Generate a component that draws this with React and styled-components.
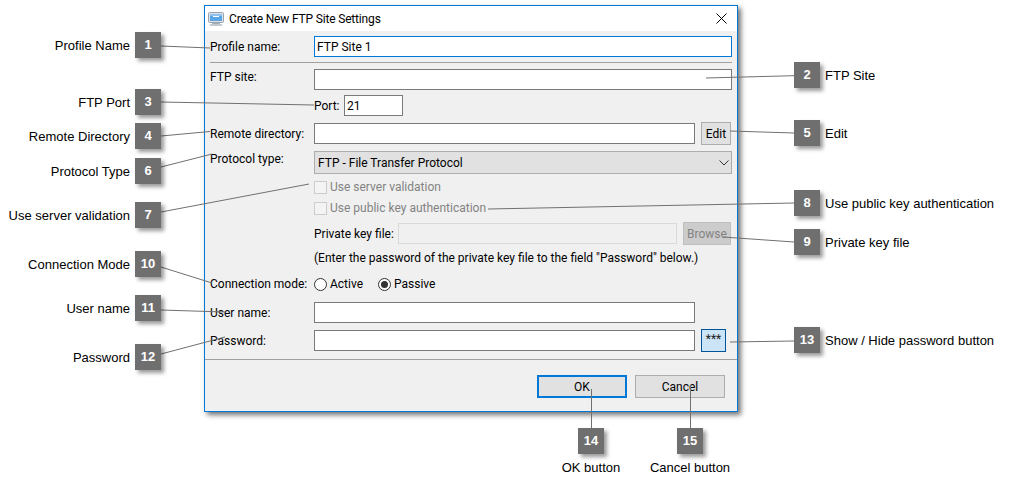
import React from "react";
import styled, { createGlobalStyle } from "styled-components";

const UI_FONT = 'Roboto, "Noto Sans", sans-serif';
const NOTE_FONT = '"Liberation Sans", Arial, sans-serif';

const GlobalStyle = createGlobalStyle`
  html, body {
    margin: 0;
    padding: 0;
    background: #fff;
  }
`;

const leftCallouts = [
  { n: 1, y: 32, text: "Profile Name", textY: 45 },
  { n: 3, y: 89, text: "FTP Port", textY: 102 },
  { n: 4, y: 123, text: "Remote Directory", textY: 136 },
  { n: 6, y: 158, text: "Protocol Type", textY: 171 },
  { n: 7, y: 202, text: "Use server validation", textY: 215 },
  { n: 10, y: 251, text: "Connection Mode", textY: 264 },
  { n: 11, y: 295, text: "User name", textY: 308 },
  { n: 12, y: 344, text: "Password", textY: 357 },
];

const rightCallouts = [
  { n: 2, y: 62, text: "FTP Site", textY: 75 },
  { n: 5, y: 120, text: "Edit", textY: 133 },
  { n: 8, y: 190, text: "Use public key authentication", textY: 203 },
  { n: 9, y: 229, text: "Private key file", textY: 242 },
  { n: 13, y: 327, text: "Show / Hide password button", textY: 340 },
];

const bottomCallouts = [
  { n: 14, x: 578, text: "OK button" },
  { n: 15, x: 677, text: "Cancel button" },
];

const leaders = [
  [161, 46, 210, 48],
  [820, 75, 706, 78],
  [161, 102, 314, 105],
  [161, 136, 210, 131.5],
  [794, 133, 730, 131],
  [161, 167, 212, 154],
  [161, 212, 309, 184],
  [794, 203, 488, 209],
  [794, 242, 723, 237],
  [161, 267, 212, 283],
  [161, 310, 225, 312],
  [161, 354, 225, 337],
  [794, 341, 730, 342],
  [591.5, 428, 591.5, 389],
  [690.5, 428, 690.5, 385],
];

const Canvas = styled.div`
  position: relative;
  width: 1012px;
  height: 491px;
  overflow: hidden;
  padding: 5px 0 0 204px;
  box-sizing: border-box;
`;

const Dialog = styled.div`
  width: 534px;
  height: 407px;
  box-sizing: border-box;
  border: 1px solid #0078d7;
  background: #f0f0f0;
  box-shadow: 3px 3px 5px rgba(0, 0, 0, 0.55);
  display: flex;
  flex-direction: column;
  font-family: ${UI_FONT};
  font-size: 12px;
  color: #000;
`;

const TitleBar = styled.div`
  height: 25px;
  flex: none;
  background: #fff;
  display: flex;
  align-items: center;
  padding: 0 10px 0 3px;
`;

const TitleText = styled.span`
  margin-left: 5px;
  flex: 1;
  letter-spacing: -0.17px;
`;

const Form = styled.div`
  flex: 1;
  padding: 0 5px;
`;

const Row = styled.div`
  display: flex;
  align-items: center;
  height: ${(p) => p.$h || 21}px;
  margin-top: ${(p) => p.$mt || 0}px;
  padding-left: ${(p) => p.$indent || 0}px;
`;

const FieldLabel = styled.label`
  width: 104px;
  flex: none;
  white-space: nowrap;
  align-self: ${(p) => (p.$top ? "flex-start" : "center")};
  line-height: 16px;
`;

const InlineLabel = styled.span`
  width: ${(p) => (p.$w ? p.$w + "px" : "auto")};
  flex: none;
  white-space: nowrap;
  color: ${(p) => (p.$disabled ? "#838383" : "#000")};
`;

const TextInput = styled.input`
  box-sizing: border-box;
  height: 21px;
  width: ${(p) => (p.$w ? p.$w + "px" : "auto")};
  flex: ${(p) => (p.$w ? "none" : 1)};
  min-width: 0;
  margin: 0;
  padding: 0 2px;
  font: inherit;
  color: #000;
  outline: none;
  background: ${(p) => (p.$disabled ? "#f0f0f0" : "#fff")};
  border: 1px solid ${(p) => (p.$focused ? "#0078d7" : p.$disabled ? "#d9d9d9" : "#7a7a7a")};
`;

const Separator = styled.div`
  height: 1px;
  margin-top: 5px;
  background: #a0a0a0;
`;

const SmallButton = styled.button`
  box-sizing: border-box;
  height: 23px;
  width: ${(p) => p.$w}px;
  flex: none;
  margin: 0 1px 0 6px;
  padding: 0;
  font: inherit;
  color: ${(p) => (p.$disabled ? "#838383" : "#000")};
  background: ${(p) => (p.$disabled ? "#cccccc" : "#e1e1e1")};
  border: 1px solid ${(p) => (p.$disabled ? "#bfbfbf" : "#adadad")};
`;

const ToggleButton = styled.button`
  box-sizing: border-box;
  height: 23px;
  width: 25px;
  flex: none;
  margin: 0 6px;
  padding: 0 0 3px;
  font: inherit;
  color: #222;
  background: #cce4f7;
  border: 1px solid #005499;
`;

const SelectBox = styled.div`
  flex: 1;
  height: 100%;
  box-sizing: border-box;
  display: flex;
  align-items: center;
  justify-content: space-between;
  padding: 0 2px 0 3px;
  background: #e1e1e1;
  border: 1px solid #adadad;
`;

const CheckOption = styled.div`
  display: flex;
  align-items: center;
  gap: 3px;
`;

const CheckBox = styled.span`
  box-sizing: border-box;
  width: 13px;
  height: 13px;
  flex: none;
  border: 1px solid #cccccc;
  background: #f4f4f4;
`;

const RadioOption = styled.div`
  width: 64px;
  display: flex;
  align-items: center;
  gap: 3px;
`;

const Radio = styled.span`
  box-sizing: border-box;
  width: 13px;
  height: 13px;
  flex: none;
  border: 1px solid #333;
  border-radius: 50%;
  background: #fff;
  display: flex;
  align-items: center;
  justify-content: center;
  &::after {
    content: "";
    display: ${(p) => (p.$checked ? "block" : "none")};
    width: 7px;
    height: 7px;
    border-radius: 50%;
    background: #333;
  }
`;

const Footer = styled.div`
  flex: none;
  height: 52px;
  box-sizing: border-box;
  border-top: 1px solid #a0a0a0;
  margin-top: 6px;
  padding: 15px 12px 0 0;
  display: flex;
  justify-content: flex-end;
  gap: 8px;
`;

const DialogButton = styled.button`
  box-sizing: border-box;
  width: 90px;
  height: 23px;
  padding: 0;
  font: inherit;
  color: #000;
  background: #e1e1e1;
  border: ${(p) => (p.$primary ? "2px solid #0078d7" : "1px solid #adadad")};
`;

const Badge = styled.div`
  position: absolute;
  left: ${(p) => p.$x}px;
  top: ${(p) => p.$y}px;
  width: 26px;
  height: 26px;
  background: #6f6f6f;
  box-shadow: 3px 3px 4px rgba(0, 0, 0, 0.4);
  color: #fff;
  font: bold 13px/26px ${NOTE_FONT};
  text-align: center;
`;

const Note = styled.div`
  position: absolute;
  top: ${(p) => p.$y - 7}px;
  font: 13px/16px ${NOTE_FONT};
  color: #000;
  white-space: nowrap;
`;

const LeftNote = styled(Note)`
  right: 882px;
`;

const RightNote = styled(Note)`
  left: 825px;
`;

const BottomNote = styled(Note)`
  left: ${(p) => p.$cx}px;
  transform: translateX(-50%);
`;

const LeaderLayer = styled.svg`
  position: absolute;
  left: 0;
  top: 0;
  pointer-events: none;
`;

const MonitorIcon = () => (
  <svg width="16" height="16" viewBox="0 0 16 16">
    <rect x="0.5" y="1.5" width="15" height="10" rx="1" fill="#dde1e6" stroke="#9aa4af" />
    <rect x="2" y="3" width="12" height="7" fill="#5aa5e6" />
    <rect x="2" y="3" width="12" height="2" fill="#8cc2f0" />
    <rect x="5" y="5" width="6" height="1" fill="#fff" />
    <rect x="4" y="12" width="8" height="1" fill="#a5adb6" />
    <rect x="2" y="13" width="12" height="2" fill="#c3c9d0" />
  </svg>
);

const CloseIcon = () => (
  <svg width="11" height="11" viewBox="0 0 11 11">
    <path d="M0.5 0.5 L10.5 10.5 M10.5 0.5 L0.5 10.5" stroke="#000" strokeWidth="1" fill="none" />
  </svg>
);

const ChevronIcon = () => (
  <svg width="10" height="6" viewBox="0 0 10 6">
    <path d="M0.5 0.5 L5 5 L9.5 0.5" stroke="#333" strokeWidth="1" fill="none" />
  </svg>
);

export default function App() {
  return (
    <Canvas>
      <GlobalStyle />
      <Dialog>
        <TitleBar>
          <MonitorIcon />
          <TitleText>Create New FTP Site Settings</TitleText>
          <CloseIcon />
        </TitleBar>
        <Form>
          <Row $mt={5}>
            <FieldLabel>Profile name:</FieldLabel>
            <TextInput $focused readOnly value="FTP Site 1" />
          </Row>
          <Separator />
          <Row $mt={6}>
            <FieldLabel $top>FTP site:</FieldLabel>
            <TextInput readOnly value="" />
          </Row>
          <Row $mt={5} $indent={104}>
            <InlineLabel $w={30}>Port:</InlineLabel>
            <TextInput $w={59} readOnly value="21" />
          </Row>
          <Row $mt={6} $h={23}>
            <FieldLabel>Remote directory:</FieldLabel>
            <TextInput readOnly value="" />
            <SmallButton $w={30}>Edit</SmallButton>
          </Row>
          <Row $mt={6} $h={23}>
            <FieldLabel $top>Protocol type:</FieldLabel>
            <SelectBox>
              FTP - File Transfer Protocol
              <ChevronIcon />
            </SelectBox>
          </Row>
          <Row $mt={6} $h={14} $indent={104}>
            <CheckOption>
              <CheckBox />
              <InlineLabel $disabled>Use server validation</InlineLabel>
            </CheckOption>
          </Row>
          <Row $mt={7} $h={14} $indent={104}>
            <CheckOption>
              <CheckBox />
              <InlineLabel $disabled>Use public key authentication</InlineLabel>
            </CheckOption>
          </Row>
          <Row $mt={7} $h={23} $indent={104}>
            <InlineLabel $w={84}>Private key file:</InlineLabel>
            <TextInput $disabled readOnly value="" />
            <SmallButton $disabled $w={48}>Browse</SmallButton>
          </Row>
          <Row $mt={5} $h={16} $indent={104}>
            <InlineLabel>(Enter the password of the private key file to the field "Password" below.)</InlineLabel>
          </Row>
          <Row $mt={10} $h={16}>
            <FieldLabel>Connection mode:</FieldLabel>
            <RadioOption>
              <Radio />
              <InlineLabel>Active</InlineLabel>
            </RadioOption>
            <RadioOption>
              <Radio $checked />
              <InlineLabel>Passive</InlineLabel>
            </RadioOption>
          </Row>
          <Row $mt={10}>
            <FieldLabel>User name:</FieldLabel>
            <TextInput $w={381} readOnly value="" />
          </Row>
          <Row $mt={6} $h={23}>
            <FieldLabel>Password:</FieldLabel>
            <TextInput readOnly value="" />
            <ToggleButton>***</ToggleButton>
          </Row>
        </Form>
        <Footer>
          <DialogButton $primary>OK</DialogButton>
          <DialogButton>Cancel</DialogButton>
        </Footer>
      </Dialog>
      <LeaderLayer width="1012" height="491">
        {leaders.map(([x1, y1, x2, y2], i) => (
          <line key={i} x1={x1} y1={y1} x2={x2} y2={y2} stroke="#707070" strokeWidth="1" />
        ))}
      </LeaderLayer>
      {leftCallouts.map((c) => (
        <React.Fragment key={c.n}>
          <Badge $x={135} $y={c.y}>{c.n}</Badge>
          <LeftNote $y={c.textY}>{c.text}</LeftNote>
        </React.Fragment>
      ))}
      {rightCallouts.map((c) => (
        <React.Fragment key={c.n}>
          <Badge $x={794} $y={c.y}>{c.n}</Badge>
          <RightNote $y={c.textY}>{c.text}</RightNote>
        </React.Fragment>
      ))}
      {bottomCallouts.map((c) => (
        <React.Fragment key={c.n}>
          <Badge $x={c.x} $y={428}>{c.n}</Badge>
          <BottomNote $y={467} $cx={c.x + 13}>{c.text}</BottomNote>
        </React.Fragment>
      ))}
    </Canvas>
  );
}
